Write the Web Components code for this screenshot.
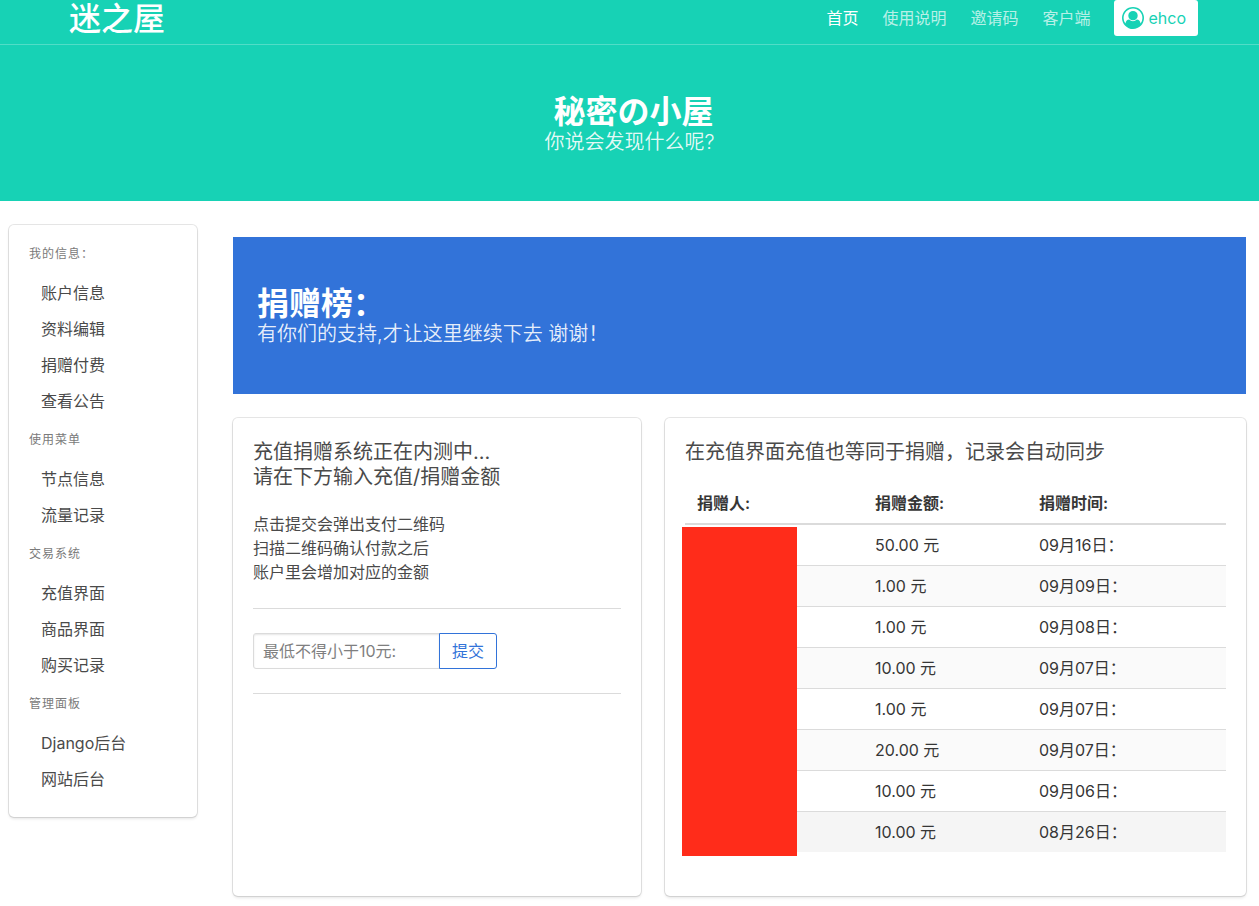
<!DOCTYPE html>
<html lang="zh-CN">
<head>
<meta charset="utf-8">
<meta name="viewport" content="width=device-width, initial-scale=1">
<title>迷之屋</title>
<style>
  body {
    margin: 0;
    background: #fff;
    color: #4a4a4a;
    font: 16px/24px Inter, "Noto Sans CJK SC", sans-serif;
    --primary: #17d2b5;
    --link: #3273d9;
    --line: #dbdbdb;
    --strong: #363636;
  }
</style>
</head>
<body>
<donate-page></donate-page>

<template id="nav-tpl">
  <style>
    :host { display: block; border-bottom: 1px solid rgba(255,255,255,.25); }
    nav { display: flex; justify-content: space-between; max-width: 1129px; min-height: 44px; margin: 0 auto; padding: 0 8px 0 16px; align-items: flex-start; }
    a { text-decoration: none; color: rgba(255,255,255,.7); }
    .brand { color: #fff; font-size: 32px; line-height: 38px; font-weight: 500; }
    .links { display: flex; gap: 24px; align-items: center; }
    .links a[aria-current] { color: #fff; }
    .links a.user { display: flex; align-items: center; gap: 4px; height: 36px; padding: 0 12px 0 8px; background: #fff; color: var(--primary); border-radius: 3px; }
    svg { width: 22px; height: 22px; display: block; }
  </style>
  <nav>
    <a class="brand" href="#">迷之屋</a>
    <div class="links">
      <a href="#" aria-current="page">首页</a>
      <a href="#">使用说明</a>
      <a href="#">邀请码</a>
      <a href="#">客户端</a>
      <a class="user" href="#">
        <svg viewBox="0 0 1792 1792" fill="currentColor" aria-hidden="true"><path d="M896 0q182 0 348 71t286 191 191 286 71 348q0 181-70.500 347t-190.500 286-286 191.500-349 71.500-349-71-285.500-191.500-190.500-286-71-347.500 71-348 191-286 286-191 348-71zm619 1351q149-205 149-455 0-156-61-298t-164-245-245-164-298-61-298 61-245 164-164 245-61 298q0 250 149 455 66-327 306-327 131 128 313 128t313-128q240 0 306 327zm-235-647q0-159-112.500-271.500t-271.500-112.500-271.500 112.500-112.500 271.500 112.500 271.500 271.500 112.500 271.500-112.500 112.500-271.500z"/></svg>
        <span>ehco</span>
      </a>
    </div>
  </nav>
</template>

<template id="hero-tpl">
  <style>
    :host { display: block; padding: 49px 24px 47px; color: #fff; background: var(--primary); }
    :host([tone="info"]) { background: var(--link); }
    :host([centered]) { text-align: center; }
    h1, p { margin: 0; }
    h1 { font-size: 32px; line-height: 36px; font-weight: 600; }
    p { font-size: 20px; line-height: 25px; color: rgba(255,255,255,.9); font-weight: 350; }
  </style>
  <h1><slot name="title"></slot></h1>
  <p><slot></slot></p>
</template>

<template id="card-tpl">
  <style>
    :host { display: block; padding: 20px; background: #fff; border-radius: 5px; box-shadow: 0 2px 3px rgba(10,10,10,.1), 0 0 0 1px rgba(10,10,10,.1); }
  </style>
  <slot></slot>
</template>

<template id="menu-tpl">
  <style>
    :host { display: block; }
    :host(:not(:first-child)) { margin-top: 12px; }
    h2 { margin: 0 0 12px; font-size: 12px; line-height: 18px; font-weight: 400; letter-spacing: 1px; color: #7a7a7a; }
    ::slotted(a) { display: block; padding: 8px 12px; line-height: 20px; color: #4a4a4a; text-decoration: none; }
  </style>
  <h2></h2>
  <nav><slot></slot></nav>
</template>

<template id="form-tpl">
  <style>
    :host { display: block; }
    form { display: flex; margin: 24px 0 0; padding: 24px 0; border: solid var(--line); border-width: 1px 0; }
    input, button { box-sizing: border-box; height: 36px; margin: 0; font: inherit; }
    input { width: 187px; padding: 0 9px; border: 1px solid var(--line); border-radius: 3px 0 0 3px; box-shadow: inset 0 1px 2px rgba(10,10,10,.1); color: var(--strong); outline: 0; }
    input::placeholder { color: #7f7f7f; opacity: 1; }
    button { margin-left: -1px; padding: 0 12px; border: 1px solid var(--link); border-radius: 0 3px 3px 0; background: #fff; color: var(--link); }
  </style>
  <form>
    <input type="text" aria-label="金额" placeholder="最低不得小于10元:">
    <button type="button">提交</button>
  </form>
</template>

<template id="table-tpl">
  <style>
    :host { display: block; position: relative; margin: 18px 0 24px; }
    table { width: 100%; table-layout: fixed; border-collapse: separate; border-spacing: 0; color: var(--strong); }
    .who { width: 178px; }
    .sum { width: 164px; }
    th, td { box-sizing: border-box; padding: 8px 12px; text-align: left; border-bottom: 1px solid var(--line); }
    th { border-bottom-width: 2px; font-weight: 600; }
    td { height: 41px; }
    tbody tr:nth-child(even) { background: #fafafa; }
    tbody tr:last-child { background: #f5f5f5; }
    tbody tr:last-child td { border-bottom: 0; height: 40px; }
    .mask { position: absolute; left: -3px; top: 44px; bottom: -4px; width: 115px; background: #ff2c1a; }
  </style>
  <table>
    <colgroup><col class="who"><col class="sum"><col></colgroup>
    <thead><tr><th>捐赠人:</th><th>捐赠金额:</th><th>捐赠时间:</th></tr></thead>
    <tbody></tbody>
  </table>
  <div class="mask"></div>
</template>

<template id="page-tpl">
  <style>
    :host { display: block; }
    header { background: var(--primary); }
    header site-hero { padding-bottom: 46px; }
    .layout { display: grid; grid-template-columns: 188px minmax(0, 1fr); gap: 36px; align-items: start; padding: 24px 13px 10px 9px; }
    main { padding-top: 12px; }
    .layout { padding-top: 24px; }
    .cards { display: grid; grid-template-columns: minmax(0, 408fr) minmax(0, 581fr); gap: 24px; margin-top: 24px; }
    h2, p { margin: 0; }
    h2 { padding-top: 2px; font-size: 20px; line-height: 25px; font-weight: 400; }
    p { margin-top: 22px; }
  </style>
  <header>
    <site-nav></site-nav>
    <site-hero centered><span slot="title">&nbsp;秘密の小屋</span>你说会发现什么呢?</site-hero>
  </header>
  <div class="layout">
    <ui-card>
      <menu-group label="我的信息："><a href="#">账户信息</a><a href="#">资料编辑</a><a href="#">捐赠付费</a><a href="#">查看公告</a></menu-group>
      <menu-group label="使用菜单"><a href="#">节点信息</a><a href="#">流量记录</a></menu-group>
      <menu-group label="交易系统"><a href="#">充值界面</a><a href="#">商品界面</a><a href="#">购买记录</a></menu-group>
      <menu-group label="管理面板"><a href="#">Django后台</a><a href="#">网站后台</a></menu-group>
    </ui-card>
    <main>
      <site-hero tone="info"><span slot="title">捐赠榜：</span>有你们的支持,才让这里继续下去 谢谢！</site-hero>
      <div class="cards">
        <ui-card>
          <h2>充值捐赠系统正在内测中...<br>请在下方输入充值/捐赠金额</h2>
          <p>点击提交会弹出支付二维码<br>扫描二维码确认付款之后<br>账户里会增加对应的金额</p>
          <pay-form></pay-form>
        </ui-card>
        <ui-card>
          <h2>在充值界面充值也等同于捐赠，记录会自动同步</h2>
          <donor-table></donor-table>
        </ui-card>
      </div>
    </main>
  </div>
</template>

<script>
  class Base extends HTMLElement {
    constructor() {
      super();
      const tpl = document.getElementById(this.constructor.tpl);
      this.attachShadow({ mode: 'open' }).append(document.importNode(tpl.content, true));
    }
  }
  customElements.define('site-nav', class extends Base { static tpl = 'nav-tpl'; });
  customElements.define('site-hero', class extends Base { static tpl = 'hero-tpl'; });
  customElements.define('ui-card', class extends Base { static tpl = 'card-tpl'; });
  customElements.define('menu-group', class extends Base {
    static tpl = 'menu-tpl';
    connectedCallback() { this.shadowRoot.querySelector('h2').textContent = this.getAttribute('label'); }
  });
  customElements.define('pay-form', class extends Base { static tpl = 'form-tpl'; });
  customElements.define('donor-table', class extends Base {
    static tpl = 'table-tpl';
    connectedCallback() {
      const rows = [['50.00', '09月16日'], ['1.00', '09月09日'], ['1.00', '09月08日'], ['10.00', '09月07日'],
                    ['1.00', '09月07日'], ['20.00', '09月07日'], ['10.00', '09月06日'], ['10.00', '08月26日']];
      this.shadowRoot.querySelector('tbody').innerHTML =
        rows.map(([sum, date]) => `<tr><td></td><td>${sum} 元</td><td>${date}：</td></tr>`).join('');
    }
  });
  customElements.define('donate-page', class extends Base { static tpl = 'page-tpl'; });
</script>
</body>
</html>
